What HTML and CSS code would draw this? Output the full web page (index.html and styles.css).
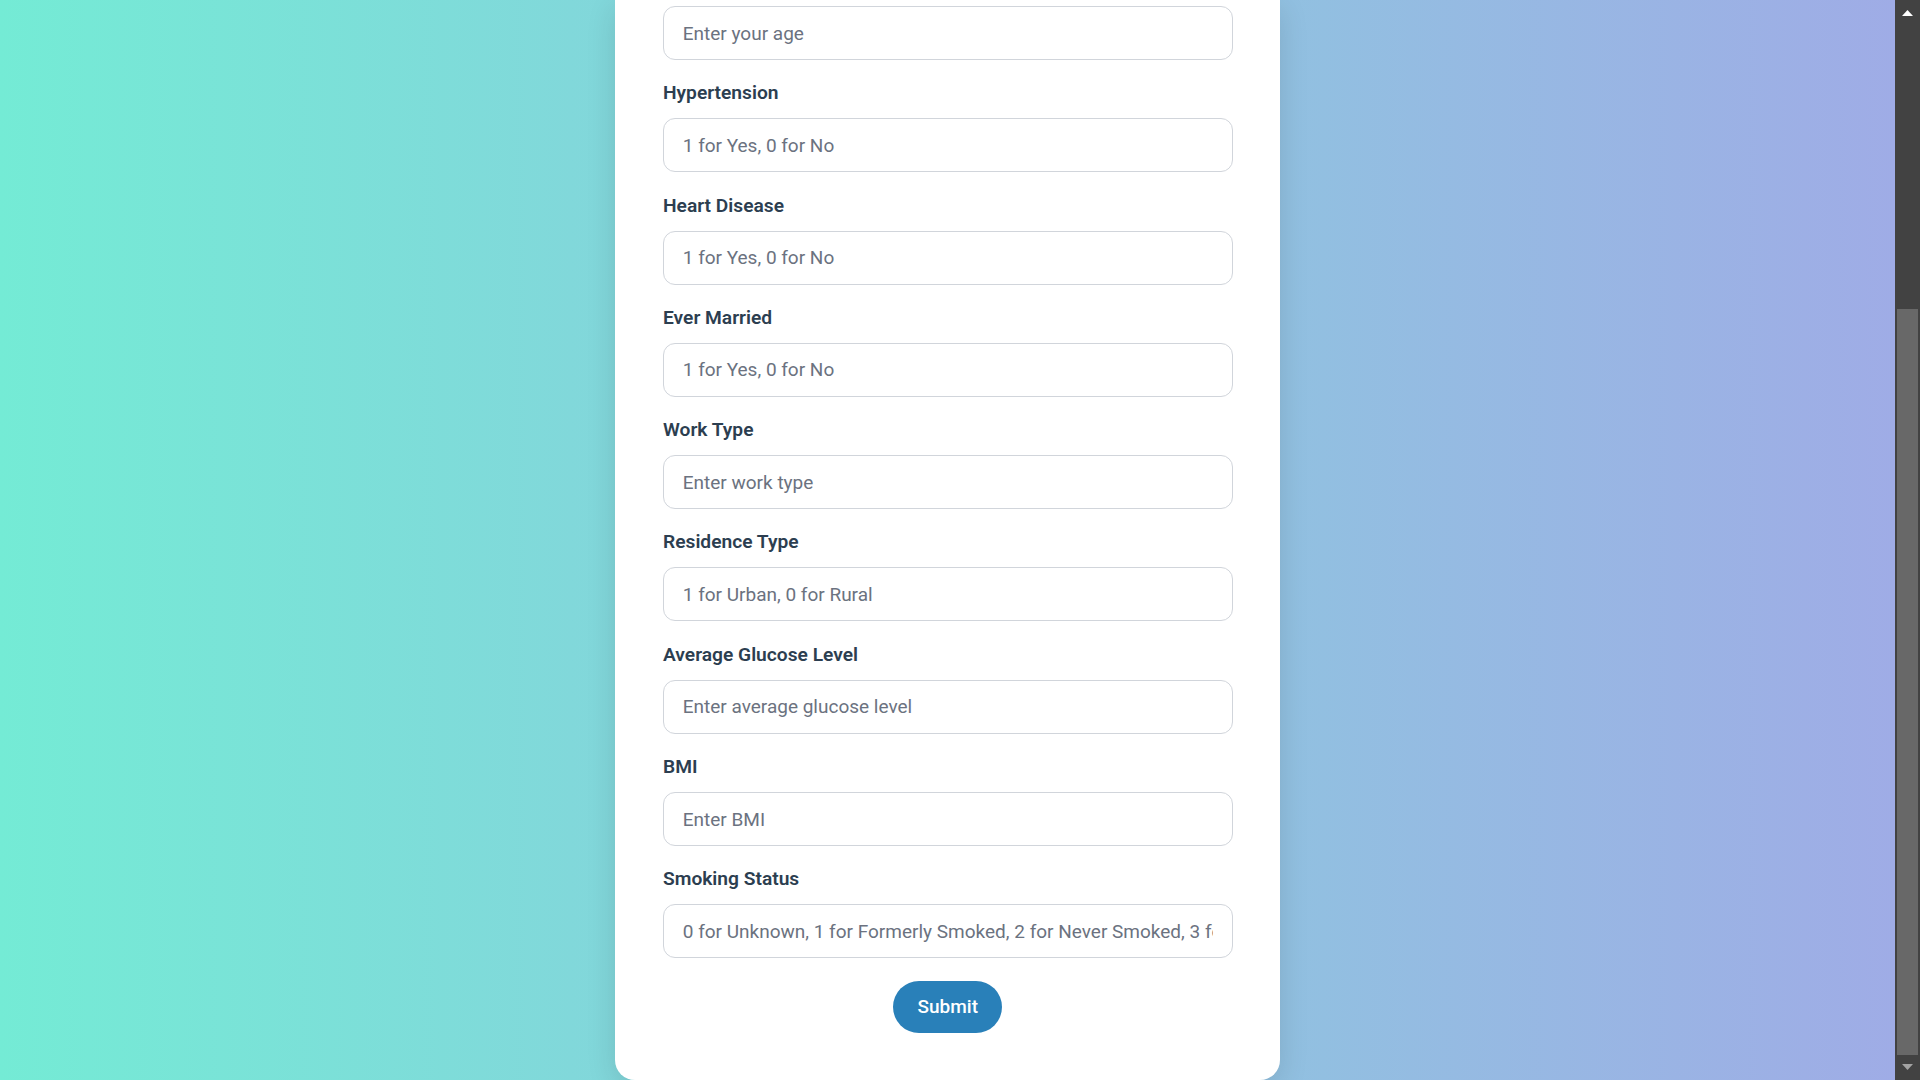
FILE: index.html
```html
<!DOCTYPE html>
<html lang="en">
<head>
<meta charset="utf-8">
<title>Stroke Prediction</title>
<link rel="stylesheet" href="styles.css">
</head>
<body>
<div class="app">
  <main class="viewport">
    <section class="card">
      <form class="form" onsubmit="return false">
        <div class="field">
          <input class="input" id="age" type="text" placeholder="Enter your age" aria-label="Age">
        </div>
        <div class="field">
          <label class="label" for="hypertension">Hypertension</label>
          <input class="input" id="hypertension" type="text" placeholder="1 for Yes, 0 for No">
        </div>
        <div class="field">
          <label class="label" for="heart">Heart Disease</label>
          <input class="input" id="heart" type="text" placeholder="1 for Yes, 0 for No">
        </div>
        <div class="field">
          <label class="label" for="married">Ever Married</label>
          <input class="input" id="married" type="text" placeholder="1 for Yes, 0 for No">
        </div>
        <div class="field">
          <label class="label" for="work">Work Type</label>
          <input class="input" id="work" type="text" placeholder="Enter work type">
        </div>
        <div class="field">
          <label class="label" for="residence">Residence Type</label>
          <input class="input" id="residence" type="text" placeholder="1 for Urban, 0 for Rural">
        </div>
        <div class="field">
          <label class="label" for="glucose">Average Glucose Level</label>
          <input class="input" id="glucose" type="text" placeholder="Enter average glucose level">
        </div>
        <div class="field">
          <label class="label" for="bmi">BMI</label>
          <input class="input" id="bmi" type="text" placeholder="Enter BMI">
        </div>
        <div class="field">
          <label class="label" for="smoking">Smoking Status</label>
          <input class="input" id="smoking" type="text" placeholder="0 for Unknown, 1 for Formerly Smoked, 2 for Never Smoked, 3 for Smokes">
        </div>
        <div class="actions">
          <button class="button" type="submit">Submit</button>
        </div>
      </form>
    </section>
  </main>
  <aside class="scrollbar" aria-hidden="true">
    <div class="sb-button">
      <svg class="sb-arrow" width="11" height="6" viewBox="0 0 11 6"><polygon points="5.5,0 11,6 0,6" fill="#ffffff"/></svg>
    </div>
    <div class="sb-track">
      <div class="sb-thumb"></div>
    </div>
    <div class="sb-button sb-button-end">
      <svg class="sb-arrow" width="11" height="6" viewBox="0 0 11 6"><polygon points="0,0 11,0 5.5,6" fill="#a3a3a3"/></svg>
    </div>
  </aside>
</div>
</body>
</html>
```

FILE: styles.css
```css
html, body {
  margin: 0;
  height: 100%;
  overflow: hidden;
}

body {
  font-family: Roboto, "Liberation Sans", Arial, sans-serif;
}

.app {
  display: flex;
  height: 100vh;
}

.viewport {
  flex: 1;
  min-width: 0;
  overflow: hidden;
  display: flex;
  justify-content: center;
  align-items: flex-start;
  background: linear-gradient(to right, #74ebd5, #9face6);
}

.card {
  width: 665px;
  box-sizing: border-box;
  background: #ffffff;
  border-radius: 0 0 20px 20px;
  padding: 6px 47.5px 47.3px 48px;
  box-shadow: 0 8px 30px rgba(0, 0, 0, 0.12);
}

.form {
  display: flex;
  flex-direction: column;
  gap: 22.3px;
}

.field {
  display: flex;
  flex-direction: column;
}

.label {
  display: block;
  font-size: 19.2px;
  line-height: 22px;
  font-weight: 600;
  color: #2c3e50;
  margin-bottom: 14px;
}

.input {
  width: 100%;
  height: 54px;
  box-sizing: border-box;
  border: 1px solid #d1d5db;
  border-radius: 12px;
  padding: 0 18.75px;
  font-family: Roboto, "Liberation Sans", Arial, sans-serif;
  font-size: 19px;
  color: #2c3e50;
  background: #ffffff;
  outline: none;
}

.input::placeholder {
  color: #6b7280;
  opacity: 1;
}

.actions {
  display: flex;
  justify-content: center;
}

.button {
  height: 52px;
  padding: 0 24.5px;
  border: none;
  border-radius: 26px;
  background: #2980b9;
  color: #ffffff;
  font-family: Roboto, "Liberation Sans", Arial, sans-serif;
  font-size: 19px;
  font-weight: 500;
  cursor: pointer;
}

.scrollbar {
  flex: none;
  width: 25px;
  background: #424242;
  display: flex;
  flex-direction: column;
}

.sb-button {
  flex: none;
  height: 25px;
  display: flex;
  justify-content: center;
  align-items: flex-start;
  padding-top: 10px;
  box-sizing: border-box;
}

.sb-button-end {
  padding-top: 9px;
}

.sb-arrow {
  display: block;
}

.sb-track {
  flex: 1;
  display: flex;
  flex-direction: column;
  justify-content: flex-end;
  padding: 0 2px;
}

.sb-thumb {
  height: 746px;
  background: #686868;
}
```
